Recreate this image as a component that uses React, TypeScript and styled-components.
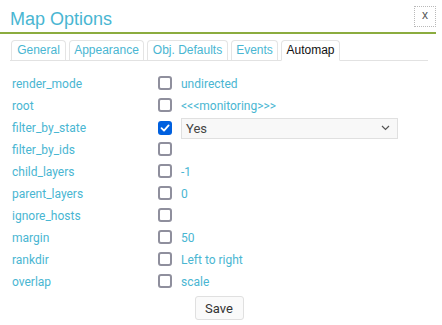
import React from "react";
import styled, { createGlobalStyle } from "styled-components";

const Global = createGlobalStyle`
  html, body { margin: 0; padding: 0; background: #fff; }
  body { font-family: Roboto, "Liberation Sans", sans-serif; }
`;

const Dialog = styled.div`
  width: 442px;
  height: 325px;
  box-sizing: border-box;
  padding: 0 6px 0 0;
`;

const Header = styled.div`
  display: flex;
  align-items: flex-start;
  justify-content: space-between;
  height: 32px;
  border-bottom: 2px solid #8bac3f;
  padding-left: 10px;
`;

const Title = styled.h1`
  margin: 8px 0 0 0;
  font-family: "Liberation Sans", Arial, sans-serif;
  font-weight: normal;
  font-size: 18px;
  line-height: 22px;
  color: #49b6d2;
`;

const Close = styled.button`
  margin-top: 6px;
  width: 22px;
  height: 21px;
  padding: 0 0 4px 0;
  border: 1px dotted #b9b9b9;
  background: #fff;
  font-family: "Liberation Sans", Arial, sans-serif;
  font-size: 12px;
  color: #555;
  line-height: 14px;
`;

const Tabs = styled.div`
  display: flex;
  gap: 3px;
  margin: 6px 8px 0 10px;
  padding-left: 1px;
  border-bottom: 1px solid #e2e2e2;
  height: 20px;
`;

const Tab = styled.div<{ $active?: boolean; $w: number }>`
  width: ${(p) => p.$w}px;
  flex: none;
  text-align: center;
  white-space: nowrap;
  height: ${(p) => (p.$active ? "21px" : "20px")};
  box-sizing: border-box;
  border: 1px solid #e4e4e4;
  border-bottom: ${(p) => (p.$active ? "1px solid #fff" : "none")};
  border-radius: 4px 4px 0 0;
  font-family: "Liberation Sans", Arial, sans-serif;
  font-size: 12px;
  line-height: 19px;
  color: ${(p) => (p.$active ? "#111" : "#49b6d2")};
  background: #fff;
`;

const Grid = styled.div`
  display: grid;
  grid-template-columns: 146px 23px 1fr;
  grid-auto-rows: 22px;
  margin: 12px 0 0 12px;
  width: 386px;
  align-items: center;
  font-size: 12px;
  color: #49b6d2;
`;

const Label = styled.div`
  line-height: 22px;
`;

const Box = styled.span<{ $checked?: boolean }>`
  display: inline-flex;
  align-items: center;
  justify-content: center;
  width: 14px;
  height: 14px;
  box-sizing: border-box;
  border-radius: 3px;
  border: ${(p) => (p.$checked ? "none" : "2px solid #8f8f9d")};
  background: ${(p) => (p.$checked ? "#0060df" : "#fff")};
`;

const Value = styled.div`
  line-height: 22px;
`;

const Select = styled.div`
  height: 21px;
  box-sizing: border-box;
  border: 1px solid #e0e0e0;
  background: #f8f8f8;
  display: flex;
  align-items: center;
  justify-content: space-between;
  padding: 0 7px 0 4px;
  color: #444;
  font-size: 13px;
`;

const Footer = styled.div`
  display: flex;
  justify-content: center;
  margin-top: 3px;
  padding-left: 2px;
`;

const SaveButton = styled.button`
  height: 24px;
  width: 49px;
  border: 1px solid #e0e0e0;
  border-radius: 3px;
  background: #fafafa;
  color: #333;
  font-family: Roboto, sans-serif;
  font-size: 13px;
  padding: 0;
`;

const tabs: { name: string; w: number; active?: boolean }[] = [
  { name: "General", w: 55 },
  { name: "Appearance", w: 75 },
  { name: "Obj. Defaults", w: 81 },
  { name: "Events", w: 47 },
  { name: "Automap", w: 59, active: true },
];

const rows: { label: string; checked?: boolean; value?: string; select?: boolean }[] = [
  { label: "render_mode", value: "undirected" },
  { label: "root", value: "<<<monitoring>>>" },
  { label: "filter_by_state", checked: true, select: true, value: "Yes" },
  { label: "filter_by_ids" },
  { label: "child_layers", value: "-1" },
  { label: "parent_layers", value: "0" },
  { label: "ignore_hosts" },
  { label: "margin", value: "50" },
  { label: "rankdir", value: "Left to right" },
  { label: "overlap", value: "scale" },
];

const Check = () => (
  <svg width="10" height="10" viewBox="0 0 10 10">
    <path d="M1.5 5.2 L4 7.6 L8.6 2.4" fill="none" stroke="#fff" strokeWidth="1.8" strokeLinecap="round" strokeLinejoin="round" />
  </svg>
);

const Chevron = () => (
  <svg width="9" height="6" viewBox="0 0 9 6">
    <path d="M1 1 L4.5 4.5 L8 1" fill="none" stroke="#555" strokeWidth="1.2" />
  </svg>
);

export default function App() {
  return (
    <>
      <Global />
      <Dialog>
        <Header>
          <Title>Map Options</Title>
          <Close>x</Close>
        </Header>
        <Tabs>
          {tabs.map((t) => (
            <Tab key={t.name} $w={t.w} $active={t.active}>
              {t.name}
            </Tab>
          ))}
        </Tabs>
        <Grid>
          {rows.map((r) => (
            <React.Fragment key={r.label}>
              <Label>{r.label}</Label>
              <div>
                <Box $checked={r.checked}>{r.checked && <Check />}</Box>
              </div>
              {r.select ? (
                <Select>
                  <span>{r.value}</span>
                  <Chevron />
                </Select>
              ) : (
                <Value>{r.value}</Value>
              )}
            </React.Fragment>
          ))}
        </Grid>
        <Footer>
          <SaveButton>Save</SaveButton>
        </Footer>
      </Dialog>
    </>
  );
}
